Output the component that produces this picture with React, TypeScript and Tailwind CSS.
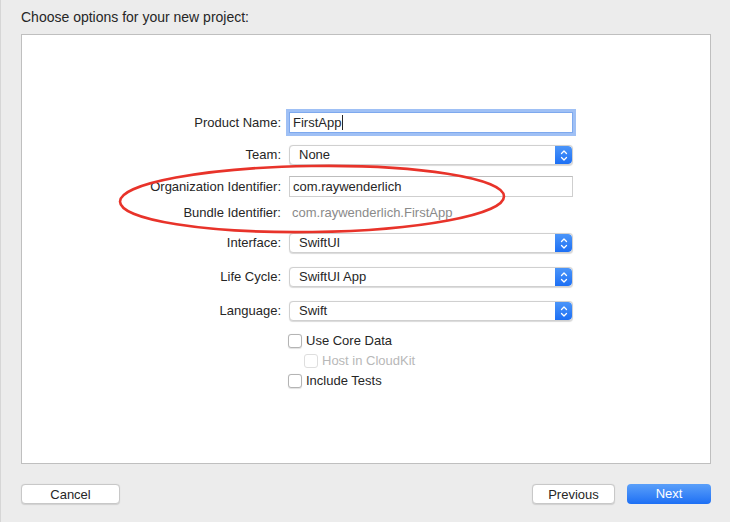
import React from "react";

const font = { fontFamily: '"Liberation Sans", Arial, sans-serif' };

function Stepper() {
  return (
    <div className="w-[17px] h-full rounded-r-[4px] bg-gradient-to-b from-[#4b95f9] to-[#1c6ff4] flex items-center justify-center">
      <svg width="8" height="13" viewBox="0 0 8 13" fill="none">
        <path d="M1.5 4.5 L4 2 L6.5 4.5" stroke="white" strokeWidth="1.3" strokeLinecap="round" strokeLinejoin="round" />
        <path d="M1.5 8.5 L4 11 L6.5 8.5" stroke="white" strokeWidth="1.3" strokeLinecap="round" strokeLinejoin="round" />
      </svg>
    </div>
  );
}

function Select({ value }: { value: string }) {
  return (
    <div className="w-[284px] h-[20px] flex bg-white rounded-[4px] border border-[#d0d0d0] shadow-[0_0.5px_1px_rgba(0,0,0,0.15)] overflow-hidden">
      <div className="flex-1 flex items-center pl-[9px] text-[13px] text-[#262626]">{value}</div>
      <Stepper />
    </div>
  );
}

function Row({
  label,
  mt,
  h,
  children,
}: {
  label: string;
  mt: string;
  h: string;
  children: React.ReactNode;
}) {
  return (
    <div className={`flex items-center ${mt} ${h}`}>
      <div className="w-[259px] text-right text-[13px] text-[#262626]">{label}</div>
      <div className="ml-[8px]">{children}</div>
    </div>
  );
}

function Check({ label, disabled }: { label: string; disabled?: boolean }) {
  return (
    <div className="h-[14px] flex items-center gap-[4px]">
      <div
        className={`w-[14px] h-[14px] rounded-[3px] bg-white border ${
          disabled ? "border-[#dedede]" : "border-[#b4b4b4] shadow-[0_0.5px_1px_rgba(0,0,0,0.12)]"
        }`}
      />
      <span className={`text-[13px] leading-[14px] ${disabled ? "text-[#b8b8b8]" : "text-[#262626]"}`}>
        {label}
      </span>
    </div>
  );
}

export default function App() {
  return (
    <div
      className="w-[730px] h-[522px] bg-[#ececec] border-l border-[#d6d6d6] flex flex-col pl-[20px] relative"
      style={font}
    >
      <div className="h-[34px] flex items-center text-[14px] text-[#262626]">
        Choose options for your new project:
      </div>

      <div className="w-[690px] h-[430px] bg-white border border-[#bfbfbf] flex flex-col pt-[77px]">
        <Row label="Product Name:" mt="" h="h-[21px]">
          <div className="w-[284px] h-[21px] border border-[#7ea9ee] ring-[3px] ring-[#9fc0f5] flex items-center pl-[3px] text-[13px] text-[#262626]">
            FirstApp
            <span className="w-px h-[15px] bg-[#262626] ml-px" />
          </div>
        </Row>
        <Row label="Team:" mt="mt-[12px]" h="h-[20px]">
          <Select value="None" />
        </Row>
        <Row label="Organization Identifier:" mt="mt-[11px]" h="h-[21px]">
          <div className="w-[284px] h-[21px] border border-[#cfcfcf] border-t-[#bdbdbd] flex items-center pl-[3px] text-[13px] text-[#262626]">
            com.raywenderlich
          </div>
        </Row>
        <Row label="Bundle Identifier:" mt="mt-[8px]" h="h-[16px]">
          <div className="pl-[3px] text-[13px] text-[#8a8a8a]">com.raywenderlich.FirstApp</div>
        </Row>
        <Row label="Interface:" mt="mt-[12px]" h="h-[20px]">
          <Select value="SwiftUI" />
        </Row>
        <Row label="Life Cycle:" mt="mt-[14px]" h="h-[20px]">
          <Select value="SwiftUI App" />
        </Row>
        <Row label="Language:" mt="mt-[14px]" h="h-[20px]">
          <Select value="Swift" />
        </Row>

        <div className="mt-[13px] pl-[266px] flex flex-col gap-[6px]">
          <Check label="Use Core Data" />
          <div className="pl-[16px]">
            <Check label="Host in CloudKit" disabled />
          </div>
          <Check label="Include Tests" />
        </div>
      </div>

      <div className="mt-[20px] h-[20px] flex items-center w-[690px]">
        <button className="w-[99px] h-[20px] rounded-[4px] bg-white border border-[#c8c8c8] shadow-[0_0.5px_1px_rgba(0,0,0,0.12)] text-[13px] text-[#262626]">
          Cancel
        </button>
        <div className="flex-1" />
        <button className="w-[83px] h-[20px] rounded-[4px] bg-white border border-[#c8c8c8] shadow-[0_0.5px_1px_rgba(0,0,0,0.12)] text-[13px] text-[#262626]">
          Previous
        </button>
        <button className="ml-[12px] w-[84px] h-[20px] rounded-[4px] bg-gradient-to-b from-[#5a9ff9] to-[#1c6ff4] text-[13px] text-white">
          Next
        </button>
      </div>

      <svg
        className="absolute left-0 top-0 pointer-events-none"
        width="730"
        height="522"
        viewBox="0 0 730 522"
      >
        <ellipse
          cx="311"
          cy="199"
          rx="192"
          ry="33"
          transform="rotate(-0.8 311 199)"
          fill="none"
          stroke="#e8332a"
          strokeWidth="2.6"
        />
      </svg>
    </div>
  );
}
